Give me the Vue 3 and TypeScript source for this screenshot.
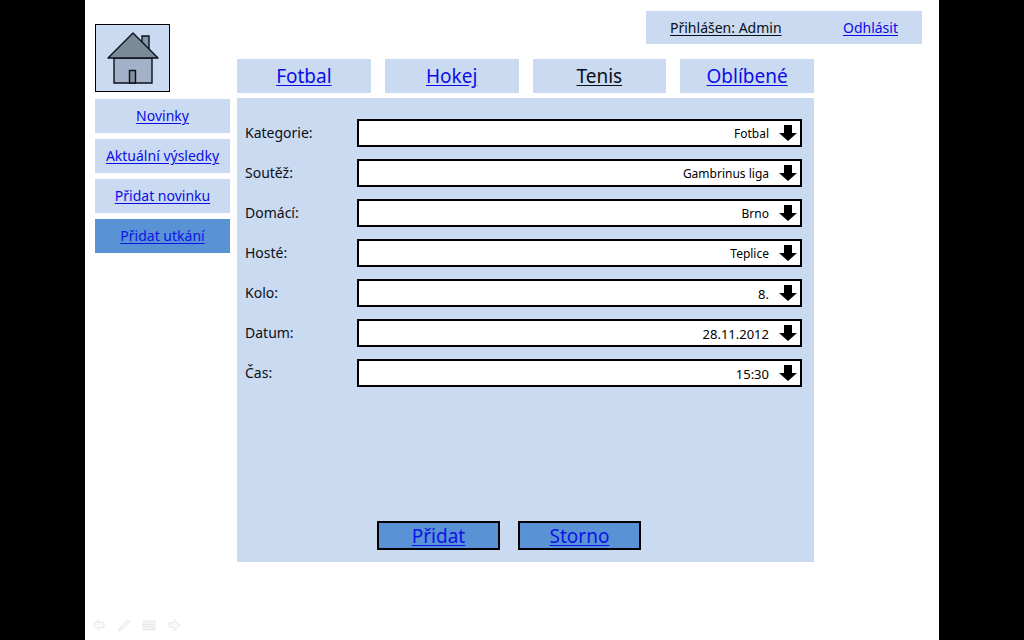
<script setup lang="ts">
import { reactive } from 'vue'

interface Field {
  id: string
  label: string
  options: string[]
  numeric?: boolean
}

const tabs = ['Fotbal', 'Hokej', 'Tenis', 'Oblíbené']
const currentTab = 'Tenis'
const menu = ['Novinky', 'Aktuální výsledky', 'Přidat novinku', 'Přidat utkání']
const currentMenu = 'Přidat utkání'

const fields: Field[] = [
  { id: 'kategorie', label: 'Kategorie:', options: ['Fotbal'] },
  { id: 'soutez', label: 'Soutěž:', options: ['Gambrinus liga'] },
  { id: 'domaci', label: 'Domácí:', options: ['Brno'] },
  { id: 'hoste', label: 'Hosté:', options: ['Teplice'] },
  { id: 'kolo', label: 'Kolo:', options: ['8.'], numeric: true },
  { id: 'datum', label: 'Datum:', options: ['28.11.2012'], numeric: true },
  { id: 'cas', label: 'Čas:', options: ['15:30'], numeric: true },
]

const values = reactive<Record<string, string>>(
  Object.fromEntries(fields.map((f) => [f.id, f.options[0]])),
)
</script>

<template>
  <div class="page">
    <div class="slide">
      <div class="columns">
        <aside class="side">
          <a class="home" href="#" aria-label="Domů">
            <svg width="52" height="52" viewBox="0 0 52 52" stroke="#0c1118" stroke-width="1.4">
              <path d="M35 4H42V20H35Z" fill="#8496ac" />
              <path d="M7 26H45V51H7Z" fill="#a3b2c8" />
              <path d="M26 1L51 26H1Z" fill="#7b8a99" stroke-linejoin="round" />
              <path d="M22.500 38.500H28.500V51H22.500Z" fill="#8290a2" />
            </svg>
          </a>
          <nav class="menu">
            <a
              v-for="item in menu"
              :key="item"
              href="#"
              class="box"
              :class="{ active: item === currentMenu }"
              >{{ item }}</a
            >
          </nav>
        </aside>

        <div class="content">
          <header class="user">
            <a href="#" class="dark">Přihlášen: Admin</a>
            <a href="#">Odhlásit</a>
          </header>
          <nav class="tabs">
            <a
              v-for="tab in tabs"
              :key="tab"
              href="#"
              class="box"
              :class="{ dark: tab === currentTab }"
              >{{ tab }}</a
            >
          </nav>
          <form class="panel" @submit.prevent>
            <div v-for="field in fields" :key="field.id" class="row">
              <label :for="field.id">{{ field.label }}</label>
              <div class="picker">
                <select
                  :id="field.id"
                  v-model="values[field.id]"
                  :class="{ numeric: field.numeric }"
                >
                  <option v-for="option in field.options" :key="option">{{ option }}</option>
                </select>
                <svg class="arrow" width="18" height="16" viewBox="0 0 18 16">
                  <path d="M5 0H13V8H18L9 16L0 8H5Z" />
                </svg>
              </div>
            </div>
            <div class="actions">
              <button type="submit">Přidat</button>
              <button type="reset">Storno</button>
            </div>
          </form>
        </div>
      </div>

      <footer class="controls">
        <button type="button" aria-label="Předchozí">
          <svg width="14" height="14" viewBox="0 0 14 14">
            <path d="M1 7L7 1.500V4.500H12V9.500H7V12.500Z" />
          </svg>
        </button>
        <button type="button" aria-label="Pero">
          <svg width="14" height="14" viewBox="0 0 14 14">
            <path d="M1 13L3 9.500L11 2L13 3.500L5 11.500Z" />
          </svg>
        </button>
        <button type="button" aria-label="Nabídka">
          <svg width="14" height="14" viewBox="0 0 14 14">
            <path d="M1 3H13V5H1ZM1 6.500H13V8.500H1ZM1 10H13V12H1Z" />
          </svg>
        </button>
        <button type="button" aria-label="Další">
          <svg width="14" height="14" viewBox="0 0 14 14">
            <path d="M13 7L7 1.500V4.500H2V9.500H7V12.500Z" />
          </svg>
        </button>
      </footer>
    </div>
  </div>
</template>

<style>
body {
  background: #000;
}
</style>

<style scoped>
.page {
  box-sizing: border-box;
  min-height: 100vh;
  padding: 0 85px;
  display: flex;
  font-family: 'Noto Sans', 'Open Sans', sans-serif;
  font-size: 14px;
  line-height: 20px;
  color: #0a0f18;
}
.slide {
  flex: 1;
  display: flex;
  flex-direction: column;
  background: #fff;
}
a {
  color: #0c0ce8;
  text-underline-offset: 2px;
}
a.dark {
  color: #0a0f18;
}
.columns {
  display: flex;
  gap: 7px;
  padding-left: 10px;
}
.side {
  flex: 0 0 135px;
  padding-top: 24px;
}
.home {
  box-sizing: border-box;
  width: 75px;
  height: 68px;
  display: flex;
  align-items: center;
  justify-content: center;
  border: 1px solid #000;
  background: #c9daf1;
}
.menu {
  display: grid;
  gap: 6px;
  margin-top: 7px;
}
.box {
  height: 34px;
  display: flex;
  align-items: center;
  justify-content: center;
  background: #c9daf1;
}
.box.active {
  background: #5a92d6;
  color: #0c14e6;
}
.content {
  flex: 1;
  display: flex;
  flex-direction: column;
  padding-top: 11px;
}
.user {
  box-sizing: border-box;
  align-self: flex-end;
  width: 276px;
  height: 33px;
  margin-right: 17px;
  padding: 0 24px;
  display: flex;
  align-items: center;
  justify-content: space-between;
  background: #c9daf1;
}
.tabs {
  display: grid;
  grid-template-columns: repeat(4, 1fr);
  gap: 14px;
  margin: 15px 125px 5px 0;
  font-size: 19px;
}
.panel {
  box-sizing: border-box;
  min-height: 464px;
  margin-right: 125px;
  padding: 21px 12px 12px 8px;
  display: flex;
  flex-direction: column;
  gap: 12px;
  background: #c9daf1;
}
.row {
  display: flex;
  align-items: center;
}
.row label {
  flex: 0 0 112px;
}
.picker {
  position: relative;
  flex: 1;
  display: flex;
}
.picker select {
  box-sizing: border-box;
  width: 100%;
  height: 28px;
  padding: 2px 31px 0 8px;
  appearance: none;
  border: 2px solid #000;
  border-radius: 0;
  background: #fff;
  color: #000;
  font: inherit;
  font-size: 12px;
  text-align: right;
  text-align-last: right;
}
.picker select.numeric {
  font-size: 13px;
}
.arrow {
  position: absolute;
  top: 6px;
  right: 5px;
  pointer-events: none;
}
.actions {
  display: flex;
  gap: 18px;
  margin-top: auto;
  padding-left: 132px;
}
.actions button {
  width: 123px;
  height: 29px;
  padding: 0;
  border: 2px solid #000;
  background: #5a92d6;
  color: #0c14e6;
  font: inherit;
  font-size: 19px;
  text-decoration: underline;
  text-underline-offset: 2px;
}
.controls {
  display: flex;
  gap: 11px;
  margin-top: auto;
  padding: 0 7px 8px;
}
.controls button {
  display: flex;
  padding: 0;
  border: 0;
  background: none;
}
.controls svg {
  fill: #f8f8f8;
  stroke: #e8e8e8;
}
</style>
